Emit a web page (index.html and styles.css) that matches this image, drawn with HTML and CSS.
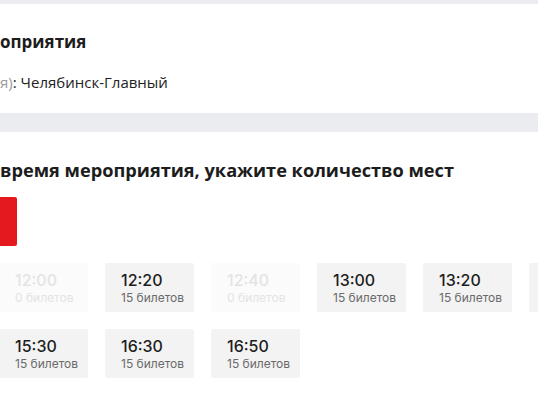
FILE: index.html
```html
<!DOCTYPE html>
<html lang="ru">
<head>
<meta charset="utf-8">
<link rel="stylesheet" href="styles.css">
</head>
<body>
<div class="band-top"></div>
<section class="panel panel-info">
  <h2 class="title title-info">оприятия</h2>
  <p class="station"><span class="label">я)</span>: Челябинск-Главный</p>
</section>
<div class="band-gap"></div>
<section class="panel panel-times">
  <h2 class="title title-times">время мероприятия, укажите количество мест</h2>
  <div class="date-btn"></div>
  <div class="slots">
    <div class="row">
      <div class="slot off"><div class="time">12:00</div><div class="left">0 билетов</div></div>
      <div class="slot"><div class="time">12:20</div><div class="left">15 билетов</div></div>
      <div class="slot off"><div class="time">12:40</div><div class="left">0 билетов</div></div>
      <div class="slot"><div class="time">13:00</div><div class="left">15 билетов</div></div>
      <div class="slot"><div class="time">13:20</div><div class="left">15 билетов</div></div>
      <div class="slot"></div>
    </div>
    <div class="row">
      <div class="slot"><div class="time">15:30</div><div class="left">15 билетов</div></div>
      <div class="slot"><div class="time">16:30</div><div class="left">15 билетов</div></div>
      <div class="slot"><div class="time">16:50</div><div class="left">15 билетов</div></div>
    </div>
  </div>
</section>
</body>
</html>
```
FILE: styles.css
```css
html, body {
  margin: 0;
  padding: 0;
}
body {
  width: 538px;
  height: 404px;
  overflow: hidden;
  background: #ffffff;
  font-family: Inter, "Noto Sans", sans-serif;
  color: #1f1f1f;
}
.band-top {
  height: 4px;
  background: #ebecef;
}
.band-gap {
  height: 19px;
  background: #ebecef;
}
.panel {
  background: #ffffff;
}
.panel-info {
  height: 109px;
  box-sizing: border-box;
  padding-top: 26px;
}
.title {
  margin: 0;
  font-family: "Open Sans", sans-serif;
  font-weight: 700;
  line-height: 24px;
  color: #1c1c1c;
  white-space: nowrap;
}
.title-info {
  font-size: 17px;
}
.title-times {
  font-size: 18.2px;
}
.station {
  margin: 18px 0 0;
  font-family: "Open Sans", sans-serif;
  font-size: 15px;
  line-height: 20px;
  color: #222222;
  white-space: nowrap;
}
.station .label {
  color: #9a9a9a;
}
.panel-times {
  padding-top: 26px;
}
.date-btn {
  margin-top: 15px;
  width: 17px;
  height: 49px;
  background: #e3191f;
  border-radius: 0 2px 2px 0;
}
.slots {
  margin-top: 17px;
  margin-left: -1px;
  display: flex;
  flex-direction: column;
  gap: 17px;
}
.row {
  display: flex;
  gap: 17px;
}
.slot {
  flex: 0 0 89px;
  height: 49px;
  box-sizing: border-box;
  padding: 8px 0 0 16px;
  background: #f3f3f3;
  border-radius: 2px;
}
.time {
  font-size: 16px;
  line-height: 19px;
  font-weight: 500;
  color: #1e1e1e;
}
.left {
  font-size: 12px;
  line-height: 16px;
  color: #6a6a6a;
}
.slot.off {
  background: #fbfbfb;
}
.slot.off .time,
.slot.off .left {
  color: #e4e4e4;
}
```
